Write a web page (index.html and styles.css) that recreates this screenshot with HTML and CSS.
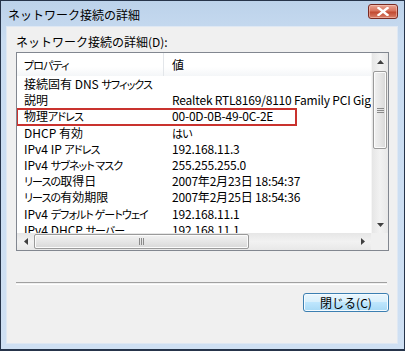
FILE: index.html
```html
<!DOCTYPE html>
<html lang="ja">
<head>
<meta charset="utf-8">
<title>ネットワーク接続の詳細</title>
<link rel="stylesheet" href="styles.css">
</head>
<body>
<div class="window">
  <div class="titlebar">
    <span class="title">ネットワーク接続の詳細</span>
    <span class="close"><svg width="12" height="9" viewBox="0 0 12 9"><path d="M1.5 1 L10.5 8 M10.5 1 L1.5 8" stroke="#fff" stroke-width="2.4" stroke-linecap="square"/></svg></span>
  </div>
  <div class="client">
    <div class="label">ネットワーク接続の詳細(D):</div>
    <div class="listview">
      <div class="content">
        <div class="header">
          <div class="c1"><span class="k">プロパティ</span></div>
          <div class="c2">値</div>
        </div>
        <div class="row"><div class="c1">接続固有 DNS <span class="k">サフィックス</span></div><div class="c2"></div></div>
        <div class="row"><div class="c1">説明</div><div class="c2">Realtek RTL8169/8110 Family PCI Gigabit Ethernet NIC</div></div>
        <div class="row"><div class="c1">物理<span class="k">アドレス</span></div><div class="c2">00-0D-0B-49-0C-2E</div></div>
        <div class="row"><div class="c1">DHCP 有効</div><div class="c2"><span class="k">はい</span></div></div>
        <div class="row"><div class="c1">IPv4 IP <span class="k">アドレス</span></div><div class="c2">192.168.11.3</div></div>
        <div class="row"><div class="c1">IPv4 <span class="k">サブネット マスク</span></div><div class="c2">255.255.255.0</div></div>
        <div class="row"><div class="c1"><span class="k">リースの</span>取得日</div><div class="c2">2007年2月23日 18:54:37</div></div>
        <div class="row"><div class="c1"><span class="k">リースの</span>有効期限</div><div class="c2">2007年2月25日 18:54:36</div></div>
        <div class="row"><div class="c1">IPv4 <span class="k">デフォルト ゲートウェイ</span></div><div class="c2">192.168.11.1</div></div>
        <div class="row"><div class="c1">IPv4 DHCP <span class="k">サーバー</span></div><div class="c2">192.168.11.1</div></div>
        <div class="highlight"></div>
      </div>
      <div class="vscroll">
        <div class="arrow"><svg width="7" height="4" viewBox="0 0 7 4"><path d="M0 4 L3.5 0 L7 4 Z" fill="#404040"/></svg></div>
        <div class="vtrack">
          <div class="vthumb"><svg width="7" height="5" viewBox="0 0 7 5"><path d="M0 0.5H7M0 2.5H7M0 4.5H7" stroke="#8a8a8a"/></svg></div>
        </div>
        <div class="arrow"><svg width="7" height="4" viewBox="0 0 7 4"><path d="M0 0 L3.5 4 L7 0 Z" fill="#404040"/></svg></div>
      </div>
      <div class="hscroll">
        <div class="arrow"><svg width="4" height="7" viewBox="0 0 4 7"><path d="M4 0 L0 3.5 L4 7 Z" fill="#404040"/></svg></div>
        <div class="htrack">
          <div class="hthumb"><svg width="5" height="7" viewBox="0 0 5 7"><path d="M0.5 0V7M2.5 0V7M4.5 0V7" stroke="#8a8a8a"/></svg></div>
        </div>
        <div class="arrow"><svg width="4" height="7" viewBox="0 0 4 7"><path d="M0 0 L4 3.5 L0 7 Z" fill="#404040"/></svg></div>
      </div>
      <div class="corner"></div>
    </div>
    <div class="separator"></div>
    <div class="buttons">
      <button class="btn">閉じる(C)</button>
    </div>
  </div>
</div>
</body>
</html>
```

FILE: styles.css
```css
html, body {
  margin: 0;
  padding: 0;
  background: #ffffff;
}
body {
  font-family: "Noto Sans CJK JP", "Liberation Sans", sans-serif;
  font-size: 12px;
  color: #000;
}
.window {
  width: 405px;
  height: 351px;
  box-sizing: border-box;
  border: 1px solid #26344a;
  border-bottom-width: 2px;
  background: linear-gradient(#bcd2ea, #c9dcf1 40px, #cfe0f3);
  padding: 0 6px 5px 5px;
  display: flex;
  flex-direction: column;
}
.titlebar {
  height: 25px;
  display: flex;
  align-items: center;
  justify-content: space-between;
  padding-left: 2px;
}
.title {
  font-size: 12px;
  line-height: 15px;
  color: #000;
  margin-top: 2px;
}
.close {
  width: 28px;
  height: 13px;
  margin-top: -4px;
  border: 1px solid #7a2a22;
  border-radius: 3px;
  background: linear-gradient(#e8a493, #d8735d 45%, #c24a32 55%, #d9806a);
  display: flex;
  align-items: center;
  justify-content: center;
  box-shadow: inset 0 0 0 1px rgba(255,220,210,0.45);
}
.client {
  flex: 1;
  background: #f0f0f0;
  border: 1px solid #dfe8f3;
  padding: 7px 8px 0 9px;
  display: flex;
  flex-direction: column;
}
.label {
  height: 15px;
  line-height: 15px;
  margin-bottom: 3px;
}
.listview {
  height: 199px;
  box-sizing: border-box;
  border: 1px solid #828790;
  background: #fff;
  display: grid;
  grid-template-columns: 1fr 17px;
  grid-template-rows: 1fr 17px;
  overflow: hidden;
  font-feature-settings: "palt";
}
.k {
  font-size: 11px;
  letter-spacing: -0.9px;
}
.content {
  position: relative;
  overflow: hidden;
}
.header {
  height: 23px;
  display: flex;
  align-items: center;
  background: linear-gradient(#ffffff, #ffffff 60%, #f4f6f8);
}
.header .c1 {
  border-right: 1px solid #e3e6ea;
  height: 23px;
  line-height: 23px;
}
.header .c2 {
  line-height: 23px;
}
.c1 {
  width: 147px;
  box-sizing: border-box;
  padding-left: 7px;
  white-space: nowrap;
  overflow: hidden;
  flex: none;
}
.c2 {
  padding-left: 8px;
  white-space: nowrap;
  flex: none;
  letter-spacing: -0.2px;
}
.row {
  height: 16.2px;
  line-height: 16px;
  display: flex;
}
.highlight {
  position: absolute;
  left: -1px;
  top: 55px;
  width: 281px;
  height: 18px;
  box-sizing: border-box;
  border: 2px solid #c9322e;
  pointer-events: none;
}
.vscroll {
  background: linear-gradient(90deg, #e6e6e6, #f2f2f2 50%, #e8e8e8);
  border-left: 1px solid #f6f6f6;
  display: flex;
  flex-direction: column;
}
.vscroll .arrow {
  height: 17px;
  display: flex;
  align-items: center;
  justify-content: center;
}
.vtrack {
  flex: 1;
  padding-top: 1px;
}
.vthumb {
  margin: 0 1px 0 1px;
  height: 78px;
  box-sizing: border-box;
  border: 1px solid #9a9a9a;
  border-radius: 2px;
  background: linear-gradient(90deg, #f1f1f1, #e6e6e6 50%, #d8d8d8);
  display: flex;
  align-items: center;
  justify-content: center;
  box-shadow: inset 0 0 0 1px #fbfbfb;
}
.hscroll {
  background: linear-gradient(#e6e6e6, #f2f2f2 50%, #e8e8e8);
  display: flex;
}
.hscroll .arrow {
  width: 17px;
  display: flex;
  align-items: center;
  justify-content: center;
}
.htrack {
  flex: 1;
}
.hthumb {
  width: 215px;
  height: 15px;
  margin-top: 1px;
  box-sizing: border-box;
  border: 1px solid #9a9a9a;
  border-radius: 2px;
  background: linear-gradient(#f1f1f1, #e6e6e6 50%, #d8d8d8);
  display: flex;
  align-items: center;
  justify-content: center;
  box-shadow: inset 0 0 0 1px #fbfbfb;
}
.corner {
  background: #f0f0f0;
}
.separator {
  margin-top: 31px;
  height: 1px;
  border-top: 1px solid #a0a0a0;
  border-bottom: 1px solid #ffffff;
  margin-right: 2px;
}
.buttons {
  display: flex;
  justify-content: flex-end;
  margin-top: 8px;
}
.btn {
  width: 86px;
  height: 19px;
  padding: 0;
  font-family: "Noto Sans CJK JP", "Liberation Sans", sans-serif;
  font-size: 12px;
  color: #000;
  border: 1px solid #3c7fb1;
  border-radius: 3px;
  background: linear-gradient(#eaf6fd, #d9f0fc 45%, #bee6fd 50%, #a7d9f5);
  box-shadow: inset 0 0 0 1px #f4fbff;
  line-height: 17px;
}
```
